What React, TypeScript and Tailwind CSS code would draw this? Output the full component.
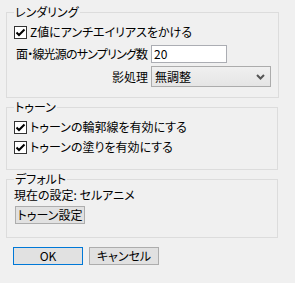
const font = "font-['Noto_Sans_CJK_JP','Noto_Sans',sans-serif] [font-feature-settings:'palt']";

function Check({ label }: { label: string }) {
  return (
    <label className="flex h-[20px] items-center">
      <svg width="13" height="13" viewBox="0 0 13 13" className="shrink-0">
        <rect x="0.5" y="0.5" width="12" height="12" fill="#ffffff" stroke="#333333" />
        <path d="M2.5 6.5 L5 9 L10.5 3.5" fill="none" stroke="#000000" strokeWidth="2" />
      </svg>
      <span className="ml-[3px] whitespace-nowrap text-[12px] leading-[14px] text-black">{label}</span>
    </label>
  );
}

function Group({ title, children, className }: { title: string; children: React.ReactNode; className?: string }) {
  return (
    <fieldset className={"border border-[#dcdcdc] px-[7px] " + (className ?? "")}>
      <legend className="px-[1px] text-[12px] leading-[14px] text-black">{title}</legend>
      {children}
    </fieldset>
  );
}

export default function App() {
  return (
    <div className={"h-[283px] w-[295px] bg-[#f0f0f0] px-[6px] pt-[5px] " + font}>
      <div className="w-[272px]">
        <Group title="レンダリング" className="pb-[10px]">
          <div className="mt-[3px]">
            <Check label="Z値にアンチエイリアスをかける" />
          </div>
          <div className="mt-[3px] flex h-[18px] items-center">
            <span className="w-[136px] whitespace-nowrap pl-[2px] text-[12px] leading-[14px] tracking-[-0.8px] text-black">面・線光源のサンプリング数</span>
            <div className="ml-[1px] flex h-[18px] w-[76px] items-center border border-[#abadb3] bg-white pl-[2px] text-[12px] text-black">
              20
            </div>
          </div>
          <div className="mt-[3px] flex h-[21px] items-center">
            <span className="w-[136px] whitespace-nowrap pr-[2px] text-right text-[12px] leading-[14px] text-black">影処理</span>
            <div className="ml-[1px] flex h-[21px] w-[120px] items-center justify-between border border-[#acacac] bg-gradient-to-b from-[#f0f0f0] to-[#e5e5e5] pl-[3px] pr-[5px] text-[12px] text-black">
              <span>無調整</span>
              <svg width="9" height="6" viewBox="0 0 9 6">
                <path d="M1 1 L4.5 4.5 L8 1" fill="none" stroke="#555555" strokeWidth="2" />
              </svg>
            </div>
          </div>
        </Group>

        <Group title="トゥーン" className="mt-[2px] pb-[12px]">
          <div className="mt-[3px]">
            <Check label="トゥーンの輪郭線を有効にする" />
            <Check label="トゥーンの塗りを有効にする" />
          </div>
        </Group>

        <Group title="デフォルト" className="mt-[2px] pb-[13px]">
          <div className="mt-[1px] h-[16px] whitespace-nowrap text-[12px] leading-[16px] text-black">現在の設定: セルアニメ</div>
          <button className="mt-[3px] ml-[1px] flex h-[18px] w-[70px] items-center justify-center border border-[#adadad] bg-[#e1e1e1] text-[12px] leading-[14px] text-black">
            トゥーン設定
          </button>
        </Group>
      </div>

      <div className="mt-[9px] ml-[7px] flex gap-[6px]">
        <button className="flex h-[18px] w-[70px] items-center justify-center border border-[#0078d7] bg-[#e1e1e1] text-[12px] leading-[14px] text-black">
          OK
        </button>
        <button className="flex h-[18px] w-[70px] items-center justify-center border border-[#adadad] bg-[#e1e1e1] text-[12px] leading-[14px] text-black">
          キャンセル
        </button>
      </div>
    </div>
  );
}
